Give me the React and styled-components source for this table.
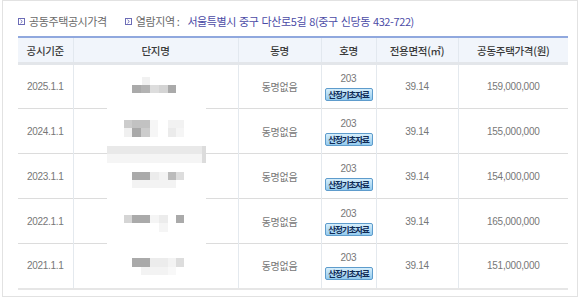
import React from "react";
import styled, { createGlobalStyle } from "styled-components";

const Global = createGlobalStyle`
  html, body { margin: 0; padding: 0; background: #fff; }
  body { font-family: "Noto Sans CJK KR", "Noto Sans", sans-serif; }
`;

const Panel = styled.div`
  box-sizing: border-box;
  margin-left: 2px;
  width: 576px;
  height: 297px;
  border: 1px solid #e2e2e2;
  padding: 12px 9px 0 15px;
`;

const TitleBar = styled.div`
  display: flex;
  align-items: center;
  gap: 18px;
  height: 16px;
  margin-bottom: 7px;
  font-size: 11px;
  letter-spacing: -0.4px;
  color: #6a6a6a;
`;

const TitleItem = styled.span`
  display: inline-flex;
  align-items: center;
  gap: 4px;
  white-space: nowrap;
`;

const Address = styled.span`
  color: #4b4ba6;
  letter-spacing: -0.4px;
  word-spacing: 1px;
  margin-left: 4px;
`;

const TableWrap = styled.div`
  position: relative;
  width: 550px;
`;

const Table = styled.table`
  width: 550px;
  table-layout: fixed;
  border-collapse: collapse;
`;

const HeadRow = styled.tr`
  border-top: 2px solid #90a8de;
  border-bottom: 3px solid #e3e6ea;
`;

const Th = styled.th`
  height: 24px;
  padding: 0;
  background: #f1f5fb;
  font-size: 10.5px;
  font-weight: 500;
  color: #3a3a3a;
  letter-spacing: -0.3px;
  border-left: ${(p) => (p.$first ? "none" : "1px solid #e2e8ef")};
`;

const Row = styled.tr`
  height: 45px;
  border-bottom: ${(p) => (p.$last ? "2px solid #e6e6e6" : "1px solid #dcdcdc")};
`;

const Td = styled.td`
  padding: 0;
  text-align: center;
  vertical-align: middle;
  font-size: 10px;
  font-family: ${(p) =>
    p.$num
      ? '"Liberation Sans", "Noto Sans CJK KR", sans-serif'
      : '"Noto Sans CJK KR", sans-serif'};
  color: #777;
  letter-spacing: -0.3px;
  border-left: ${(p) => (p.$first ? "none" : "1px solid #e4e9ee")};
`;

const HoStack = styled.div`
  display: flex;
  flex-direction: column;
  align-items: center;
  gap: 4px;
  padding-top: 1px;
`;

const HoNum = styled.span`
  line-height: 11px;
  font-family: "Liberation Sans", sans-serif;
  font-size: 10px;
  letter-spacing: -0.3px;
  color: #777;
`;

const DataButton = styled.button`
  box-sizing: border-box;
  display: flex;
  align-items: center;
  justify-content: center;
  width: 48px;
  height: 13px;
  padding: 0;
  border: 1px solid #5e9ccc;
  border-radius: 2px;
  background: linear-gradient(#d6eefb, #94cbee);
  color: #0f2a55;
  font-family: "Noto Sans CJK KR", sans-serif;
  font-weight: 700;
  font-size: 8.5px;
  letter-spacing: -1.1px;
  line-height: 11px;
  white-space: nowrap;
  overflow: hidden;
  cursor: pointer;
`;

const Mask = styled.div`
  position: absolute;
  left: 89px;
  top: 29px;
  width: 99px;
  height: 222px;
  background: #fff;
`;

const Icon = () => (
  <svg width="7" height="7" viewBox="0 0 7 7">
    <rect x="0.5" y="0.5" width="6" height="6" fill="none" stroke="#6c6cb6" strokeWidth="1" />
    <polyline points="2.5,1.8 4.3,3.5 2.5,5.2" fill="none" stroke="#6c6cb6" strokeWidth="1" />
  </svg>
);

// pixel blocks of a redacted name (page coords x, y, w, h, colour)
const BLOCKS = [
  [142, 77, 8, 8, "#f1f1f1"],
  [132, 85, 9, 8, "#aaaaaa"],
  [141, 85, 9, 8, "#b3b3b3"],
  [150, 85, 9, 8, "#dddddd"],
  [159, 85, 9, 8, "#d4d4d4"],
  [168, 85, 8, 8, "#aaaaaa"],

  [124, 120, 8, 8, "#cccccc"],
  [132, 120, 18, 8, "#c2c2c2"],
  [150, 120, 8, 8, "#f6f6f6"],
  [168, 120, 16, 8, "#f2f2f2"],
  [124, 128, 8, 9, "#f0f0f0"],
  [132, 128, 9, 9, "#a9a9a9"],
  [141, 128, 9, 9, "#cccccc"],
  [150, 128, 8, 9, "#f6f6f6"],
  [168, 128, 8, 9, "#ebebeb"],
  [176, 128, 8, 9, "#f5f5f5"],

  [0, 146, 99, 8, "#e9e9e9", true],
  [0, 154, 99, 9, "#f5f5f5", true],
  [95, 146, 4, 17, "#dcdcdc", true],

  [132, 172, 18, 8, "#aaaaaa"],
  [150, 172, 9, 8, "#ececec"],
  [159, 172, 9, 8, "#f3f3f3"],
  [168, 172, 8, 8, "#bbbbbb"],
  [176, 172, 8, 8, "#dddddd"],
  [132, 180, 44, 8, "#f3f3f3"],

  [124, 215, 8, 8, "#d5d5d5"],
  [132, 215, 18, 8, "#aaaaaa"],
  [150, 215, 9, 8, "#f5f5f5"],
  [159, 215, 9, 8, "#ececec"],
  [176, 215, 8, 8, "#aaaaaa"],
  [159, 223, 9, 9, "#f5f5f5"],

  [132, 258, 18, 9, "#aaaaaa"],
  [150, 258, 18, 9, "#ececec"],
  [168, 258, 8, 9, "#f3f3f3"],
  [176, 258, 8, 9, "#dddddd"],
  [141, 267, 27, 8, "#f3f3f3"],
  [168, 267, 8, 8, "#f8f8f8"],
];

const Redaction = () => (
  <Mask>
    <svg width="99" height="222" viewBox="0 0 99 222" shapeRendering="crispEdges">
      {BLOCKS.map(([x, y, w, h, c, local], i) => (
        <rect
          key={i}
          x={local ? x : x - 107}
          y={y - 65}
          width={w}
          height={h}
          fill={c}
        />
      ))}
    </svg>
  </Mask>
);

const ROWS = [
  { date: "2025.1.1", price: "159,000,000" },
  { date: "2024.1.1", price: "155,000,000" },
  { date: "2023.1.1", price: "154,000,000" },
  { date: "2022.1.1", price: "165,000,000" },
  { date: "2021.1.1", price: "151,000,000" },
];

const COLS = [55, 165, 83, 55, 82, 110];
const HEADS = ["공시기준", "단지명", "동명", "호명", "전용면적(㎡)", "공동주택가격(원)"];

export default function App() {
  return (
    <>
      <Global />
      <Panel>
        <TitleBar>
          <TitleItem>
            <Icon />
            공동주택공시가격
          </TitleItem>
          <TitleItem>
            <Icon />
            열람지역 :<Address>서울특별시 중구 다산로5길 8(중구 신당동 432-722)</Address>
          </TitleItem>
        </TitleBar>
        <TableWrap>
          <Table>
            <colgroup>
              {COLS.map((w, i) => (
                <col key={i} style={{ width: w }} />
              ))}
            </colgroup>
            <thead>
              <HeadRow>
                {HEADS.map((h, i) => (
                  <Th key={h} $first={i === 0}>
                    {h}
                  </Th>
                ))}
              </HeadRow>
            </thead>
            <tbody>
              {ROWS.map((r, i) => (
                <Row key={r.date} $last={i === ROWS.length - 1}>
                  <Td $first $num>{r.date}</Td>
                  <Td></Td>
                  <Td>동명없음</Td>
                  <Td>
                    <HoStack>
                      <HoNum>203</HoNum>
                      <DataButton type="button">산정기초자료</DataButton>
                    </HoStack>
                  </Td>
                  <Td $num>39.14</Td>
                  <Td $num>{r.price}</Td>
                </Row>
              ))}
            </tbody>
          </Table>
          <Redaction />
        </TableWrap>
      </Panel>
    </>
  );
}
